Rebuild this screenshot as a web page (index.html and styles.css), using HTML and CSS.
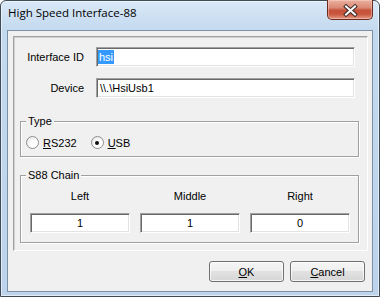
FILE: index.html
```html
<!DOCTYPE html>
<html lang="en">
<head>
    <meta charset="UTF-8">
    <title>High Speed Interface-88</title>
    <link rel="stylesheet" href="styles.css">
</head>
<body>
    <div class="window">
        <div class="titlebar">
            <span class="title">High Speed Interface-88</span>
            <button class="close" type="button">
                <svg width="46" height="19" viewBox="0 0 46 19">
                    <path d="M19 6.5 L28 14.5 M28 6.5 L19 14.5" stroke="#3a2a28" stroke-width="4" stroke-linecap="square" fill="none"/>
                    <path d="M19 6.5 L28 14.5 M28 6.5 L19 14.5" stroke="#ffffff" stroke-width="2" stroke-linecap="square" fill="none"/>
                </svg>
            </button>
        </div>

        <div class="client">
            <div class="panel">
                <div class="field-row">
                    <span class="field-label">Interface ID</span>
                    <div class="edit edit-first"><span class="sel">hsi</span></div>
                </div>
                <div class="field-row">
                    <span class="field-label">Device</span>
                    <div class="edit">\\.\HsiUsb1</div>
                </div>

                <fieldset class="group type-group">
                    <legend>Type</legend>
                    <div class="radios">
                        <label class="radio"><span class="circle"></span><span><u>R</u>S232</span></label>
                        <label class="radio"><span class="circle checked"></span><span><u>U</u>SB</span></label>
                    </div>
                </fieldset>

                <fieldset class="group chain-group">
                    <legend>S88 Chain</legend>
                    <div class="chain">
                        <div class="chain-col">
                            <span>Left</span>
                            <div class="edit num">1</div>
                        </div>
                        <div class="chain-col">
                            <span>Middle</span>
                            <div class="edit num">1</div>
                        </div>
                        <div class="chain-col">
                            <span>Right</span>
                            <div class="edit num">0</div>
                        </div>
                    </div>
                </fieldset>
            </div>

            <div class="buttons">
                <button class="btn" type="button"><u>O</u>K</button>
                <button class="btn" type="button"><u>C</u>ancel</button>
            </div>
        </div>
    </div>
</body>
</html>
```

FILE: styles.css
```css
body {
    margin: 0;
    background: #fff;
    font-family: "Liberation Sans", Arial, sans-serif;
    font-size: 11px;
    color: #000;
}

.window {
    width: 380px;
    height: 297px;
    box-sizing: border-box;
    border: 1px solid #3f4b57;
    border-radius: 6px 6px 0 0;
    background: linear-gradient(#d9e8f7, #c3d9ef 30px, #bcd3eb);
    box-shadow: inset 0 0 0 1px rgba(255, 255, 255, 0.55);
    display: flex;
    flex-direction: column;
}

.titlebar {
    height: 29px;
    flex-shrink: 0;
    display: flex;
    justify-content: space-between;
    align-items: flex-start;
    padding-left: 7px;
}

.title {
    font-family: "Open Sans", sans-serif;
    font-size: 11.5px;
    margin-top: 4px;
}

.close {
    width: 46px;
    height: 20px;
    margin: -1px 6px 0 0;
    padding: 0;
    border: 1px solid #6b2a20;
    border-top: none;
    border-radius: 0 0 5px 5px;
    background: linear-gradient(#eab0a0 0%, #dc8a75 40%, #c6513a 55%, #c9583f 75%, #e39a84 100%);
    box-shadow: inset 0 0 0 1px rgba(255, 220, 210, 0.45);
}

.close svg {
    display: block;
    margin: -1px 0 0 -1px;
}

.client {
    flex: 1;
    margin: 0 6px 4px;
    border: 1px solid #7d91a6;
    background: #f0f0f0;
    display: flex;
    flex-direction: column;
}

.panel {
    height: 215px;
    box-sizing: border-box;
    margin: 5px 4px 0 5px;
    padding-top: 10px;
    border: 1px solid;
    border-color: #a0a0a0 #fff #fff #a0a0a0;
    box-shadow: inset 1px 1px #cfcfcf;
}

.field-row {
    display: flex;
    align-items: center;
    height: 20px;
}

.field-row + .field-row {
    margin-top: 11px;
}

.field-label {
    width: 70px;
    text-align: right;
    margin-right: 12px;
}

.edit {
    height: 20px;
    box-sizing: border-box;
    border: 1px solid;
    border-color: #a0a0a0 #fff #fff #a0a0a0;
    box-shadow: inset 1px 1px #696969, inset -1px -1px #e3e3e3;
    background: #fff;
    padding: 0 3px;
    display: flex;
    align-items: center;
}

.field-row .edit {
    width: 259px;
}

.edit-first {
    padding-left: 1px;
}

.sel {
    background: #3399ff;
    color: #fff;
    line-height: 14px;
    padding: 0 1px;
}

.group {
    margin: 0 8px 0 6px;
    padding: 8px 7px 7px 5px;
    min-width: 0;
    border: 1px solid #a0a0a0;
    box-shadow: inset 1px 1px #fff, 1px 1px #fff;
}

.group legend {
    padding: 0 2px;
    line-height: 13px;
    background: #f0f0f0;
}

.type-group {
    margin-top: 17px;
}

.chain-group {
    margin-top: 12px;
    padding-bottom: 9px;
}

.radios {
    display: flex;
    align-items: center;
    height: 13px;
}

.radio {
    display: flex;
    align-items: center;
    gap: 4px;
    margin-right: 14px;
}

.circle {
    width: 11px;
    height: 11px;
    border: 1px solid #8e8f8f;
    border-radius: 50%;
    background: radial-gradient(circle at 65% 65%, #fff 35%, #dcdcdc 100%);
    display: flex;
    align-items: center;
    justify-content: center;
}

.circle.checked::after {
    content: "";
    width: 4px;
    height: 4px;
    border-radius: 50%;
    background: #111;
}

.chain {
    display: grid;
    grid-template-columns: repeat(3, 100px);
    column-gap: 10px;
    margin-left: 4px;
}

.chain-col {
    display: flex;
    flex-direction: column;
    align-items: center;
    gap: 10px;
    line-height: 13px;
}

.chain-col .edit {
    width: 100%;
}

.num {
    justify-content: center;
}

.buttons {
    display: flex;
    justify-content: flex-end;
    gap: 6px;
    padding: 10px 7px 0 0;
}

.btn {
    width: 75px;
    height: 21px;
    padding: 0;
    border: 1px solid #707070;
    border-radius: 3px;
    background: linear-gradient(#f6f6f6 0%, #eeeeee 50%, #e2e2e2 50%, #d6d6d6 100%);
    box-shadow: inset 0 0 0 1px rgba(255, 255, 255, 0.75);
    font-family: "Liberation Sans", Arial, sans-serif;
    font-size: 11px;
    color: #000;
}
```
